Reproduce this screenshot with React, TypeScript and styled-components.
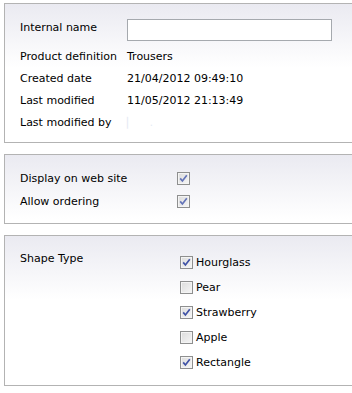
import styled, { createGlobalStyle } from "styled-components";

const GlobalStyle = createGlobalStyle`
  html, body {
    margin: 0;
    padding: 0;
    background: #fff;
    overflow: hidden;
  }
  body {
    font-family: "DejaVu Sans", "Liberation Sans", sans-serif;
    font-size: 11px;
    color: #000;
  }
`;

const shapes = [
  { name: "Hourglass", checked: true },
  { name: "Pear", checked: false },
  { name: "Strawberry", checked: true },
  { name: "Apple", checked: false },
  { name: "Rectangle", checked: true },
];

const details = [
  { label: "Product definition", value: "Trousers" },
  { label: "Created date", value: "21/04/2012 09:49:10" },
  { label: "Last modified", value: "11/05/2012 21:13:49" },
];

function Check({ checked, muted }: { checked: boolean; muted?: boolean }) {
  return (
    <Box>
      {checked && (
        <svg width="11" height="11" viewBox="0 0 11 11">
          <path
            d="M2.2 5.4 L4.4 8 L8.8 2.2"
            fill="none"
            stroke={muted ? "#6474b8" : "#3f52a6"}
            strokeWidth="1.7"
          />
        </svg>
      )}
    </Box>
  );
}

function App() {
  return (
    <Page>
      <GlobalStyle />
      <Panel $top={15} $bottom={8}>
        <NameRow>
          <NameLabel>Internal name</NameLabel>
          <TextInput type="text" />
        </NameRow>
        <Details>
          {details.map((d) => (
            <DetailRow key={d.label}>
              <span>{d.label}</span>
              <span>{d.value}</span>
            </DetailRow>
          ))}
          <DetailRow>
            <span>Last modified by</span>
            <Redacted>▏ .</Redacted>
          </DetailRow>
        </Details>
      </Panel>

      <Panel $top={12} $bottom={10}>
        <FlagRow>
          <span>Display on web site</span>
          <Check checked muted />
        </FlagRow>
        <FlagRow>
          <span>Allow ordering</span>
          <Check checked muted />
        </FlagRow>
      </Panel>

      <Panel $top={14} $bottom={10}>
        <ShapeGrid>
          <ShapeLabel>Shape Type</ShapeLabel>
          <ShapeList>
            {shapes.map((s) => (
              <ShapeRow key={s.name}>
                <Check checked={s.checked} />
                <span>{s.name}</span>
              </ShapeRow>
            ))}
          </ShapeList>
        </ShapeGrid>
      </Panel>
    </Page>
  );
}

const Page = styled.div`
  display: flex;
  flex-direction: column;
  gap: 11px;
  padding: 3px 0 0 4px;
`;

const Panel = styled.section<{ $top: number; $bottom: number }>`
  margin-right: -12px;
  border: 1px solid #b3b3b3;
  background: linear-gradient(to bottom, #eaeaf1 0, #ffffff 64px);
  padding: ${(p) => p.$top}px 0 ${(p) => p.$bottom}px 15px;
`;

const NameRow = styled.div`
  display: flex;
  align-items: flex-start;
  height: 22px;
`;

const NameLabel = styled.span`
  width: 107px;
  line-height: 14px;
  padding-top: 2px;
`;

const TextInput = styled.input`
  box-sizing: border-box;
  width: 205px;
  height: 22px;
  margin: 0;
  border: 1px solid #a5a9ae;
  background: #fff;
  padding: 2px 4px;
  font: inherit;
  outline: none;
`;

const Details = styled.div`
  display: flex;
  flex-direction: column;
  margin-top: 5px;
  white-space: nowrap;
`;

const DetailRow = styled.div`
  display: grid;
  grid-template-columns: 107px 1fr;
  height: 22px;
  line-height: 22px;
`;

const Redacted = styled.span`
  color: #e6eaf3;
  font-size: 10px;
  letter-spacing: 6px;
`;

const FlagRow = styled.div`
  display: grid;
  grid-template-columns: 157px 13px;
  align-items: center;
  height: 23px;
`;

const ShapeGrid = styled.div`
  display: grid;
  grid-template-columns: 160px 1fr;
`;

const ShapeLabel = styled.span`
  line-height: 14px;
  padding-top: 2px;
`;

const ShapeList = styled.div`
  display: flex;
  flex-direction: column;
`;

const ShapeRow = styled.label`
  display: flex;
  align-items: center;
  gap: 3px;
  height: 25px;
`;

const Box = styled.span`
  box-sizing: border-box;
  width: 13px;
  height: 13px;
  flex: none;
  display: flex;
  align-items: center;
  justify-content: center;
  border: 1px solid #8e8f8f;
  background: linear-gradient(135deg, #dcdcdc 0, #f6f6f6 100%);
  box-shadow: inset 0 0 0 1px #f4f4f4;
`;

export default App;
